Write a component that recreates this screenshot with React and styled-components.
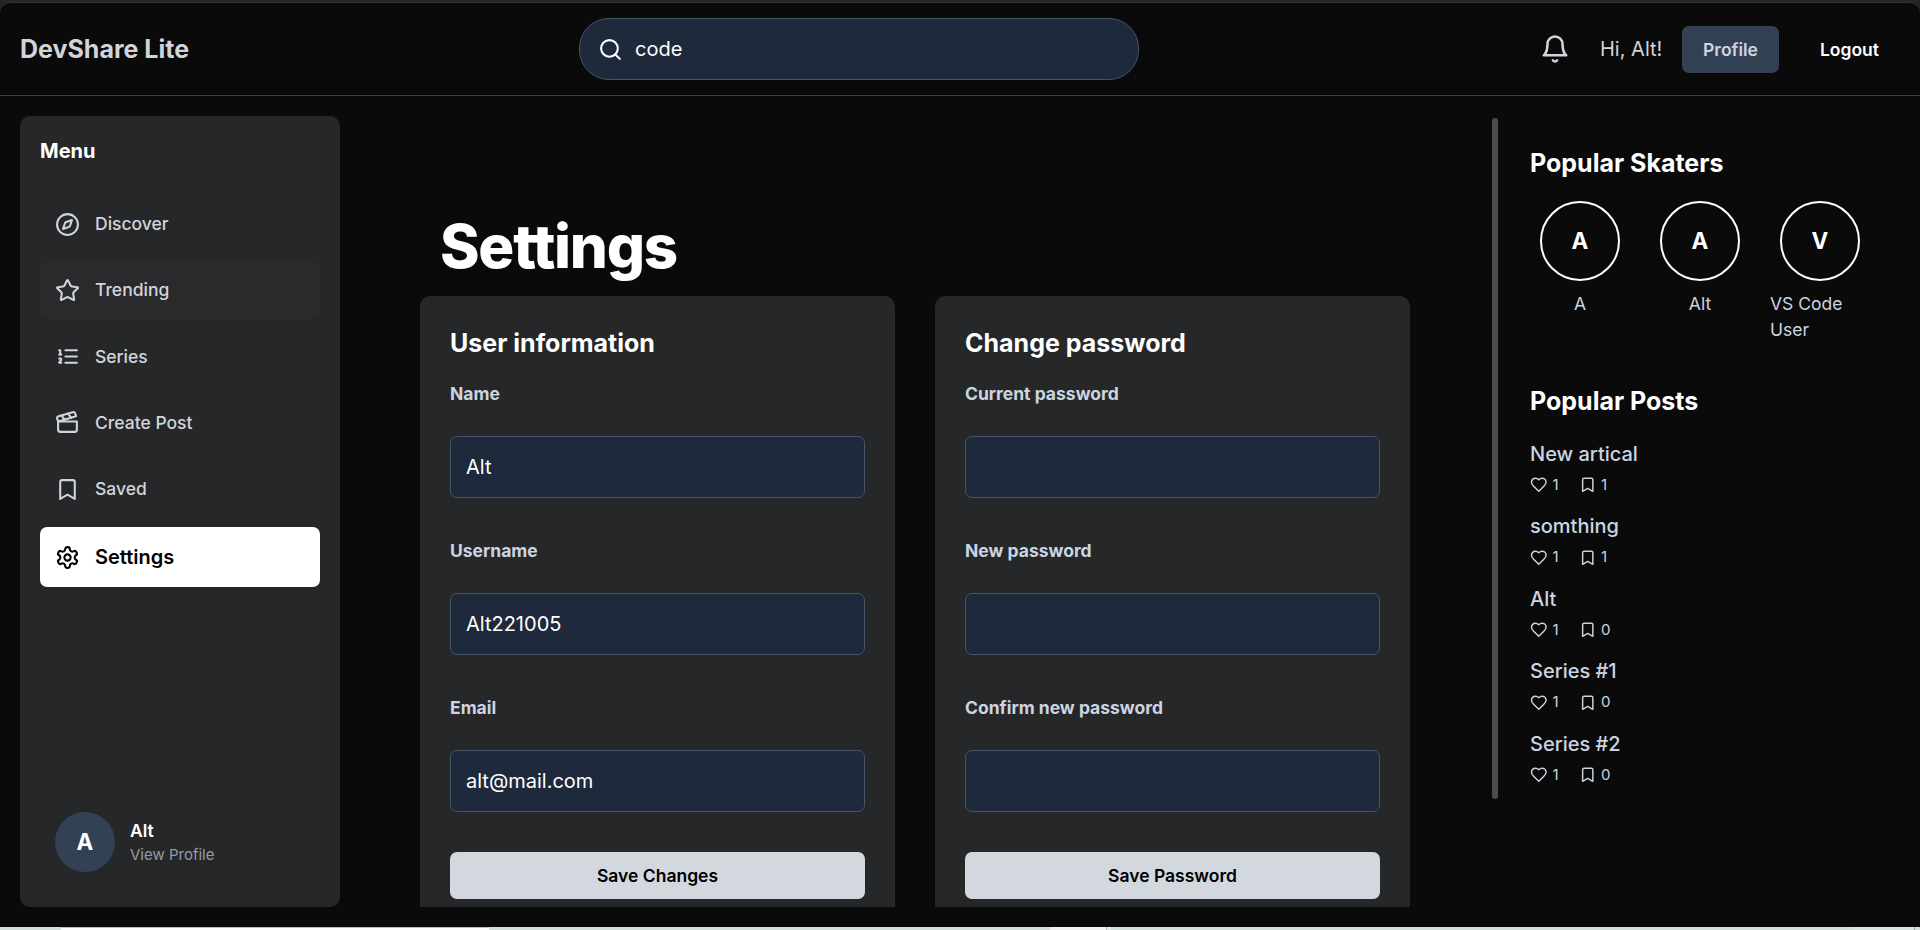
import React from "react";
import styled, { createGlobalStyle, css } from "styled-components";
import {
  LuBell,
  LuBookmark,
  LuClapperboard,
  LuCompass,
  LuHeart,
  LuListOrdered,
  LuSearch,
  LuSettings,
  LuStar,
} from "react-icons/lu";

const GlobalStyle = createGlobalStyle`
  *, *::before, *::after { box-sizing: border-box; }
  body {
    margin: 0;
    background: #242527;
    color: #ffffff;
    font-family: Inter, "Liberation Sans", sans-serif;
    font-size: 20px;
    line-height: 1.5;
    overflow: hidden;
  }
  h1, h2, h3, p { margin: 0; }
  button, input { font-family: inherit; }
`;

const Screen = styled.div`
  display: flex;
  flex-direction: column;
  height: 930px;
`;

const FrameTop = styled.div`
  flex: 0 0 2px;
  background: #242527;
`;

const Page = styled.div`
  flex: 1;
  min-height: 0;
  display: flex;
  flex-direction: column;
  background: #0a0a0a;
  border-top: 1px solid #303133;
  border-radius: 11px 11px 0 0;
`;

const FrameBottom = styled.div`
  flex: 0 0 3px;
  display: flex;
  background: #d4dfde;
`;

const Strip = styled.span`
  flex: 0 0 ${(p) => p.$w}px;
  background: ${(p) => p.$bg || "transparent"};
  border-top: ${(p) => (p.$edge ? `1px solid ${p.$edge}` : "0")};
`;

/* Header */

const Header = styled.header`
  flex: 0 0 93px;
  display: flex;
  justify-content: space-between;
  align-items: center;
  padding: 0 20px;
  border-bottom: 1px solid #374151;
`;

const Brand = styled.h1`
  width: 168px;
  white-space: nowrap;
  font-size: 25px;
  line-height: 35px;
  font-weight: 700;
  color: #d1d5db;
`;

const SearchBox = styled.label`
  display: flex;
  align-items: center;
  gap: 12px;
  width: 560px;
  height: 62px;
  padding: 0 18px;
  border: 1px solid #475569;
  border-radius: 30px;
  background: #1e293b;
`;

const SearchInput = styled.input`
  flex: 1;
  min-width: 0;
  padding: 0;
  border: 0;
  outline: 0;
  background: none;
  color: #ffffff;
  font-size: 20px;
  line-height: 30px;
`;

const Account = styled.div`
  display: flex;
  align-items: center;
  width: 370px;
`;

const BellButton = styled.button`
  flex: none;
  display: flex;
  padding: 10px;
  margin-right: 20px;
  border: 0;
  background: none;
  color: #d1d5db;
`;

const Greeting = styled.span`
  flex: 1;
  white-space: nowrap;
  color: #d1d5db;
`;

const HeaderButton = styled.button`
  flex: none;
  height: 47px;
  width: ${(p) => p.$w}px;
  padding: 0;
  border: 0;
  border-radius: 7px;
  font-size: 17.5px;
  font-weight: 600;
  color: #ffffff;
  background: transparent;
  & + & { margin-left: 20px; }
  ${(p) =>
    p.$filled &&
    css`
      background: #334155;
      color: #cbd5e1;
    `}
`;

/* Body */

const Body = styled.div`
  flex: 1;
  min-height: 0;
  display: flex;
  padding: 20px;
`;

const Sidebar = styled.aside`
  flex: 0 0 320px;
  display: flex;
  flex-direction: column;
  padding: 20px;
  border-radius: 10px;
  background: #262729;
`;

const MenuTitle = styled.h2`
  margin-bottom: 30px;
  font-size: 20px;
  line-height: 30px;
  font-weight: 700;
`;

const Nav = styled.nav`
  display: flex;
  flex-direction: column;
  gap: 10px;
`;

const NavItem = styled.a`
  display: flex;
  align-items: center;
  gap: 15px;
  padding: 15px;
  border-radius: 7px;
  font-size: 17.5px;
  line-height: 26.25px;
  font-weight: 500;
  color: #d1d5db;
  ${(p) => p.$hovered && css`background: #292a2c;`}
  ${(p) =>
    p.$active &&
    css`
      background: #ffffff;
      color: #000000;
      font-size: 20px;
      line-height: 30px;
      font-weight: 600;
    `}
`;

const UserCard = styled.div`
  display: flex;
  align-items: center;
  gap: 15px;
  margin-top: auto;
  padding: 15px;
`;

const UserAvatar = styled.span`
  display: grid;
  place-items: center;
  width: 60px;
  height: 60px;
  border-radius: 50%;
  background: #334155;
  font-size: 22.5px;
  font-weight: 700;
`;

const UserName = styled.p`
  font-size: 17.5px;
  line-height: 26px;
  font-weight: 600;
`;

const UserHint = styled.p`
  font-size: 15px;
  line-height: 22.5px;
  color: #949ca8;
`;

/* Settings */

const Main = styled.main`
  flex: 0 0 1152px;
  padding: 100px 82px 0 80px;
  overflow: hidden;
`;

const PageTitle = styled.h1`
  padding-left: 20px;
  margin-bottom: 20px;
  font-size: 60px;
  line-height: 60px;
  font-weight: 800;
  letter-spacing: -1.25px;
`;

const Cards = styled.div`
  display: grid;
  grid-template-columns: 1fr 1fr;
  gap: 40px;
`;

const Card = styled.section`
  padding: 30px;
  border-radius: 10px;
  background: #262729;
`;

const CardTitle = styled.h2`
  margin-bottom: 20px;
  font-size: 25px;
  line-height: 35px;
  font-weight: 700;
`;

const Field = styled.label`
  display: flex;
  flex-direction: column;
  gap: 29px;
  margin-bottom: 40px;
  font-size: 17.5px;
  line-height: 26px;
  font-weight: 700;
  color: #cbd5e1;
`;

const TextInput = styled.input`
  width: 100%;
  height: 62px;
  padding: 0 15px;
  border: 1px solid #475569;
  border-radius: 7px;
  outline: 0;
  background: #1e293b;
  color: #ffffff;
  font-size: 20px;
`;

const SaveButton = styled.button`
  width: 100%;
  height: 47px;
  padding: 0;
  border: 0;
  border-radius: 7px;
  background: #d3d8df;
  color: #000000;
  font-size: 17.5px;
  font-weight: 600;
`;

/* Right column */

const Aside = styled.aside`
  flex: 1;
  display: flex;
  gap: 32px;
`;

const ScrollThumb = styled.div`
  width: 6px;
  height: 681px;
  margin-top: 2px;
  border-radius: 3px;
  background: #4b4b4b;
`;

const Popular = styled.div`
  padding-top: 30px;
`;

const PopularTitle = styled.h2`
  margin-bottom: 20px;
  font-size: 25px;
  line-height: 35px;
  font-weight: 700;
`;

const People = styled.div`
  display: flex;
  gap: 20px;
  margin-bottom: 40px;
`;

const Person = styled.div`
  width: 100px;
  display: flex;
  flex-direction: column;
  align-items: center;
  gap: 10px;
  font-size: 17.5px;
  line-height: 26.25px;
  color: #cbd5e1;
`;

const PersonAvatar = styled.span`
  display: grid;
  place-items: center;
  width: 80px;
  height: 80px;
  border: 2px solid #ffffff;
  border-radius: 50%;
  color: #ffffff;
  font-size: 22.5px;
  font-weight: 700;
`;

const Posts = styled.div`
  display: flex;
  flex-direction: column;
  gap: 15px;
`;

const PostTitle = styled.h3`
  margin-bottom: 5px;
  font-size: 20px;
  line-height: 30px;
  font-weight: 500;
  color: #cbd5e1;
`;

const Stats = styled.div`
  display: flex;
  gap: 20px;
  font-size: 15px;
  line-height: 22.5px;
  color: #cbd5e1;
`;

const Stat = styled.span`
  display: flex;
  align-items: center;
  gap: 5px;
`;

const navItems = [
  { label: "Discover", Icon: LuCompass },
  { label: "Trending", Icon: LuStar, hovered: true },
  { label: "Series", Icon: LuListOrdered },
  { label: "Create Post", Icon: LuClapperboard },
  { label: "Saved", Icon: LuBookmark },
  { label: "Settings", Icon: LuSettings, active: true },
];

const cards = [
  {
    title: "User information",
    action: "Save Changes",
    fields: [
      ["Name", "Alt", "text"],
      ["Username", "Alt221005", "text"],
      ["Email", "alt@mail.com", "text"],
    ],
  },
  {
    title: "Change password",
    action: "Save Password",
    fields: [
      ["Current password", "", "password"],
      ["New password", "", "password"],
      ["Confirm new password", "", "password"],
    ],
  },
];

const people = [
  ["A", "A"],
  ["A", "Alt"],
  ["V", "VS Code User"],
];

const posts = [
  ["New artical", 1, 1],
  ["somthing", 1, 1],
  ["Alt", 1, 0],
  ["Series #1", 1, 0],
  ["Series #2", 1, 0],
];

export default function App() {
  return (
    <Screen>
      <GlobalStyle />
      <FrameTop />
      <Page>
        <Header>
          <Brand>DevShare Lite</Brand>
          <SearchBox>
            <LuSearch size={25} />
            <SearchInput defaultValue="code" />
          </SearchBox>
          <Account>
            <BellButton>
              <LuBell size={30} />
            </BellButton>
            <Greeting>Hi, Alt!</Greeting>
            <HeaderButton $filled $w={97}>Profile</HeaderButton>
            <HeaderButton $w={101}>Logout</HeaderButton>
          </Account>
        </Header>
        <Body>
          <Sidebar>
            <MenuTitle>Menu</MenuTitle>
            <Nav>
              {navItems.map(({ label, Icon, hovered, active }) => (
                <NavItem key={label} $hovered={hovered} $active={active}>
                  <Icon size={25} />
                  {label}
                </NavItem>
              ))}
            </Nav>
            <UserCard>
              <UserAvatar>A</UserAvatar>
              <div>
                <UserName>Alt</UserName>
                <UserHint>View Profile</UserHint>
              </div>
            </UserCard>
          </Sidebar>
          <Main>
            <PageTitle>Settings</PageTitle>
            <Cards>
              {cards.map((card) => (
                <Card key={card.title}>
                  <CardTitle>{card.title}</CardTitle>
                  {card.fields.map(([label, value, type]) => (
                    <Field key={label}>
                      {label}
                      <TextInput type={type} defaultValue={value} />
                    </Field>
                  ))}
                  <SaveButton>{card.action}</SaveButton>
                </Card>
              ))}
            </Cards>
          </Main>
          <Aside>
            <ScrollThumb />
            <Popular>
              <PopularTitle>Popular Skaters</PopularTitle>
              <People>
                {people.map(([initial, name]) => (
                  <Person key={name}>
                    <PersonAvatar>{initial}</PersonAvatar>
                    <span>{name}</span>
                  </Person>
                ))}
              </People>
              <PopularTitle>Popular Posts</PopularTitle>
              <Posts>
                {posts.map(([title, likes, saves]) => (
                  <div key={title}>
                    <PostTitle>{title}</PostTitle>
                    <Stats>
                      <Stat>
                        <LuHeart size={17.5} />
                        {likes}
                      </Stat>
                      <Stat>
                        <LuBookmark size={17.5} />
                        {saves}
                      </Stat>
                    </Stats>
                  </div>
                ))}
              </Posts>
            </Popular>
          </Aside>
        </Body>
      </Page>
      <FrameBottom>
        <Strip $w={61} />
        <Strip $w={428} $bg="#ffffff" $edge="#bdc0c0" />
        <Strip $w={561} />
        <Strip $w={56} $bg="#f1f3f2" />
        <Strip $w={1} $bg="#b4bbba" />
        <Strip $w={4} $bg="#e2e9e8" />
        <Strip $w={743} />
        <Strip $w={60} $bg="#dbe4e3" />
        <Strip $w={1} $bg="#9aa3a3" />
      </FrameBottom>
    </Screen>
  );
}
